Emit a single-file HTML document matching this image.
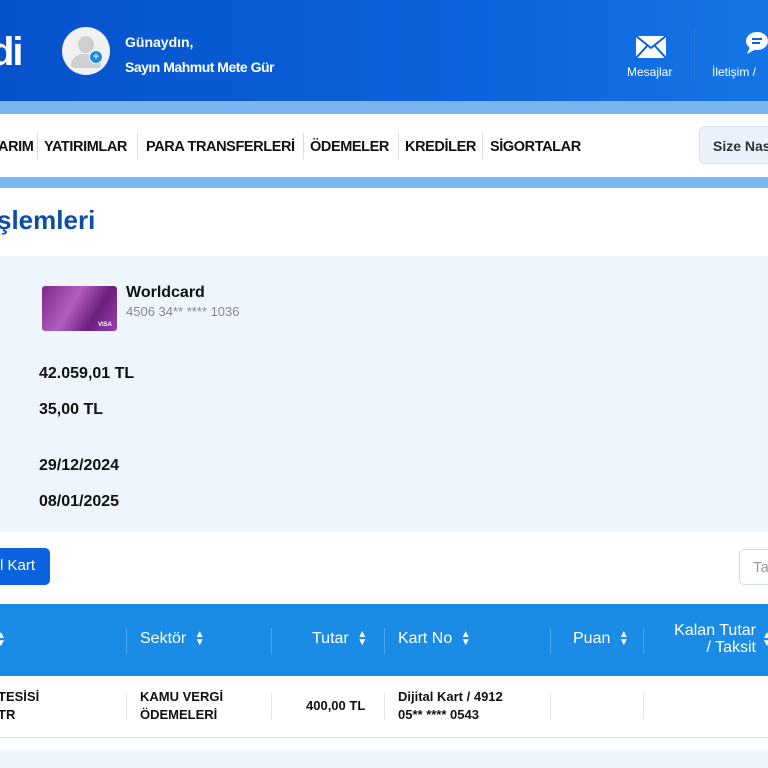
<!DOCTYPE html>
<html><head><meta charset="utf-8"><style>
*{margin:0;padding:0;box-sizing:border-box}
body{width:768px;height:768px;overflow:hidden;font-family:"Liberation Sans","DejaVu Sans",sans-serif;background:#fff;position:relative}
.a{position:absolute}
.hdr{left:0;top:0;width:768px;height:101px;background:linear-gradient(90deg,#0652cc,#0a63dc 60%,#1575e6)}
.nav b{font-size:14.5px;color:#111;letter-spacing:-0.4px}
.sep{width:1px;height:26px;background:#ddd;top:133px}
.th{color:#fff;font-size:16px;top:630px}
.vs{width:1px;background:#4aa8ee;top:628px;height:26px}
.cell{font-size:13px;font-weight:bold;color:#111;line-height:18px}
.rs{width:1px;background:#e3e3e3;top:693px;height:26px}
.ar{display:inline-block;font-size:10px;vertical-align:middle;line-height:8px;margin-left:4px}
</style></head><body>
<div class="a hdr"></div>
<div class="a" style="left:-10px;top:30px;font-size:40px;font-weight:bold;color:#fff;letter-spacing:-2px">di</div>
<div class="a" style="left:62px;top:27px;width:48px;height:48px;border-radius:50%;background:#f1f1f1">
 <div class="a" style="left:16px;top:9px;width:16px;height:17px;border-radius:50%;background:#cfcfcf"></div>
 <div class="a" style="left:9px;top:27px;width:30px;height:14px;border-radius:14px 14px 3px 3px;background:#cfcfcf"></div>
 <div class="a" style="left:27px;top:23px;width:14px;height:14px;border-radius:50%;background:#1a8ae6;border:1px solid #fff;color:#fff;font-size:12px;line-height:11px;text-align:center">+</div>
</div>
<div class="a" style="left:125px;top:34px;color:#fff;font-size:14px;font-weight:bold">Günaydın,</div>
<div class="a" style="left:125px;top:59px;color:#fff;font-size:14px;font-weight:bold;letter-spacing:-0.5px">Sayın Mahmut Mete Gür</div>
<svg class="a" style="left:636px;top:36px" width="30" height="22" viewBox="0 0 30 22"><rect width="30" height="22" fill="#fff"/><path d="M0 0L15 12L30 0M0 22L11 10M30 22L19 10" stroke="#0a63dc" stroke-width="2" fill="none"/></svg>
<div class="a" style="left:627px;top:65px;color:#fff;font-size:12px">Mesajlar</div>
<div class="a" style="left:694px;top:30px;width:1px;height:50px;background:#2b7ae0"></div>
<svg class="a" style="left:744px;top:30px" width="24" height="28" viewBox="0 0 24 28"><ellipse cx="13" cy="11" rx="11" ry="9" fill="#fff"/><path d="M6 17L3 24L12 19Z" fill="#fff"/><path d="M8 9h10M8 13h8" stroke="#0a63dc" stroke-width="2"/></svg>
<div class="a" style="left:712px;top:65px;color:#fff;font-size:12px;white-space:nowrap">İletişim / </div>
<div class="a" style="left:0;top:101px;width:768px;height:13px;background:#79b4ee"></div>
<div class="a nav" style="left:-2px;top:138px"><b>ARIM</b></div>
<div class="a sep" style="left:37px"></div>
<div class="a nav" style="left:44px;top:138px"><b>YATIRIMLAR</b></div>
<div class="a sep" style="left:137px"></div>
<div class="a nav" style="left:146px;top:138px"><b>PARA TRANSFERLERİ</b></div>
<div class="a sep" style="left:303px"></div>
<div class="a nav" style="left:310px;top:138px"><b>ÖDEMELER</b></div>
<div class="a sep" style="left:398px"></div>
<div class="a nav" style="left:405px;top:138px"><b>KREDİLER</b></div>
<div class="a sep" style="left:482px"></div>
<div class="a nav" style="left:490px;top:138px"><b>SİGORTALAR</b></div>
<div class="a" style="left:699px;top:126px;width:80px;height:38px;border-radius:6px;background:#e9f2fb;border:1px solid #d6e4f2;padding:11px 0 0 13px;font-size:14px;font-weight:bold;color:#333;white-space:nowrap">Size Nas</div>
<div class="a" style="left:0;top:177px;width:768px;height:11px;background:#7ab6ee"></div>
<div class="a" style="left:-3px;top:205px;font-size:26px;font-weight:bold;color:#0c4ea6">şlemleri</div>
<div class="a" style="left:0;top:256px;width:768px;height:276px;background:#eef5fc"></div>
<div class="a" style="left:42px;top:286px;width:75px;height:45px;border-radius:3px;background:linear-gradient(120deg,#7b2a8a,#b25ec0 40%,#6a1f7e 70%,#9a3fae)"><div class="a" style="right:5px;bottom:3px;color:#fff;font-size:6px;font-weight:bold">VISA</div></div>
<div class="a" style="left:126px;top:284px;font-size:16px;font-weight:bold;color:#111">Worldcard</div>
<div class="a" style="left:126px;top:304px;font-size:13px;color:#888">4506 34** **** 1036</div>
<div class="a" style="left:39px;top:365px;font-size:16px;font-weight:bold;color:#111">42.059,01 TL</div>
<div class="a" style="left:39px;top:401px;font-size:16px;font-weight:bold;color:#111">35,00 TL</div>
<div class="a" style="left:39px;top:457px;font-size:16px;font-weight:bold;color:#111">29/12/2024</div>
<div class="a" style="left:39px;top:493px;font-size:16px;font-weight:bold;color:#111">08/01/2025</div>
<div class="a" style="left:-10px;top:548px;width:60px;height:37px;border-radius:5px;background:#0a63dc;color:#fff;font-size:15px;padding:9px 0 0 10px">l Kart</div>
<div class="a" style="left:739px;top:549px;width:40px;height:36px;border-radius:5px;border:1px solid #c8dff3;color:#999;font-size:15px;padding:9px 0 0 13px">Ta</div>
<div class="a" style="left:0;top:604px;width:768px;height:72px;background:#1a8ce6"></div>
<div class="a" style="left:-4px;top:632px;color:#fff;font-size:10px;line-height:8px">▲<br>▼</div>
<div class="a vs" style="left:126px"></div>
<div class="a th" style="left:140px">Sektör <span class="ar">▲<br>▼</span></div>
<div class="a vs" style="left:271px"></div>
<div class="a th" style="left:312px">Tutar <span class="ar">▲<br>▼</span></div>
<div class="a vs" style="left:384px"></div>
<div class="a th" style="left:398px">Kart No <span class="ar">▲<br>▼</span></div>
<div class="a vs" style="left:550px"></div>
<div class="a th" style="left:573px">Puan <span class="ar">▲<br>▼</span></div>
<div class="a vs" style="left:643px"></div>
<div class="a" style="left:656px;top:622px;color:#fff;font-size:16px;text-align:right;line-height:17px;width:100px">Kalan Tutar<br>/ Taksit</div>
<div class="a" style="left:762px;top:632px;color:#fff;font-size:10px;line-height:8px">▲<br>▼</div>
<div class="a cell" style="left:-2px;top:688px">TESİSİ<br>TR</div>
<div class="a rs" style="left:126px"></div>
<div class="a cell" style="left:140px;top:688px">KAMU VERGİ<br>ÖDEMELERİ</div>
<div class="a rs" style="left:271px"></div>
<div class="a cell" style="left:306px;top:697px">400,00 TL</div>
<div class="a rs" style="left:384px"></div>
<div class="a cell" style="left:398px;top:688px">Dijital Kart / 4912<br>05** **** 0543</div>
<div class="a rs" style="left:550px"></div>
<div class="a rs" style="left:643px"></div>
<div class="a" style="left:0;top:737px;width:768px;height:1px;background:#d8dde3"></div>
<div class="a" style="left:0;top:750px;width:768px;height:18px;background:#eef5fc"></div>
</body></html>
